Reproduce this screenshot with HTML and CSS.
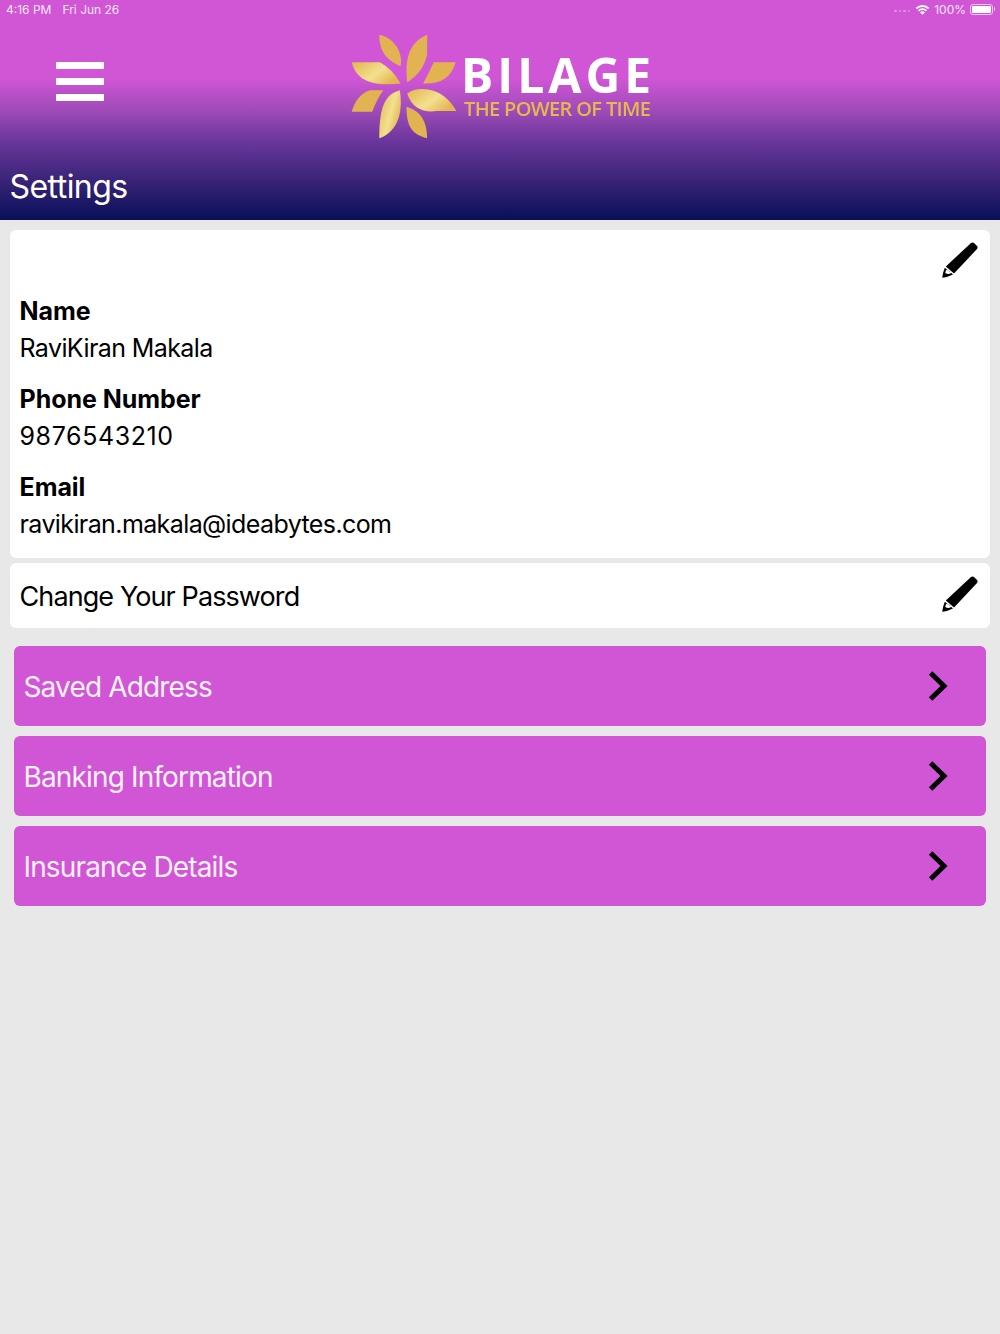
FILE: index.html
```html
<!DOCTYPE html>
<html>
    <head>
        <meta charset="utf-8">
        <title>Settings</title>
        <link rel="stylesheet" href="styles.css">
    </head>
    <body>
        <header class="top">
            <div class="status">
                <div class="status_left"><span>4:16 PM</span><span>Fri Jun 26</span></div>
                <div class="status_right">
                    <span class="dots"><i></i><i></i><i></i><i></i></span>
                    <svg class="wifi" viewBox="0 0 16 12" width="15" height="11">
                        <path d="M0.6 4.2 A10.6 10.6 0 0 1 15.4 4.2 L14 5.7 A8.6 8.6 0 0 0 2 5.7 Z" fill="#fff"/>
                        <path d="M3 6.7 A7.2 7.2 0 0 1 13 6.7 L11.6 8.1 A5.2 5.2 0 0 0 4.4 8.1 Z" fill="#fff"/>
                        <path d="M5.4 9.2 A3.8 3.8 0 0 1 10.6 9.2 L8 11.8 Z" fill="#fff"/>
                    </svg>
                    <span>100%</span>
                    <span class="battery"><b></b></span>
                </div>
            </div>
            <div class="brand_row">
                <div class="menu"><span></span><span></span><span></span></div>
                <div class="logo">
                    <svg class="flower" viewBox="30 40 325 322" width="108" height="107">
                        <defs>
                            <linearGradient id="shine" x1="0" y1="0" x2="1" y2="0.6">
                                <stop offset="0" stop-color="#e3b64f"/>
                                <stop offset="0.6" stop-color="#f3e08f"/>
                                <stop offset="1" stop-color="#e3b64f"/>
                            </linearGradient>
                        </defs>
                        <path fill="#e2b451" d="M118 45 C165 55 190 100 182 140 C150 125 118 105 118 45Z"/>
                        <path fill="#e2b451" d="M262 45 L262 105 Q250 160 202 188 C195 120 205 70 262 45Z"/>
                        <path fill="#e2b451" d="M348 128 H282 Q265 165 250 192 C300 195 335 175 348 128Z"/>
                        <path fill="url(#shine)" d="M35 128 H120 Q160 150 182 192 C110 200 50 190 35 128Z"/>
                        <path fill="#e2b451" d="M130 212 H90 Q50 225 35 277 H97 Q110 240 130 212Z"/>
                        <path fill="url(#shine)" d="M180 212 C135 225 118 260 118 357 C175 335 190 280 180 212Z"/>
                        <path fill="url(#shine)" d="M202 222 Q225 205 265 210 Q320 220 350 275 H290 C250 280 215 265 202 222Z"/>
                        <path fill="#e2b451" d="M200 262 C245 275 262 310 262 357 C215 345 200 320 200 262Z"/>
                    </svg>
                    <div class="logo_text">
                        <div class="logo_name">BILAGE</div>
                        <div class="logo_tag">THE POWER OF TIME</div>
                    </div>
                </div>
            </div>
            <h1 class="title">Settings</h1>
        </header>

        <main class="content">
            <section class="card profile">
                <div class="edit_row">
                    <svg class="pencil" viewBox="0 0 36 36" width="36" height="36"><use href="#pen"/></svg>
                </div>
                <div class="field">
                    <div class="label">Name</div>
                    <div class="value">RaviKiran Makala</div>
                </div>
                <div class="field">
                    <div class="label">Phone Number</div>
                    <div class="value phone">9876543210</div>
                </div>
                <div class="field">
                    <div class="label">Email</div>
                    <div class="value">ravikiran.makala@ideabytes.com</div>
                </div>
            </section>

            <section class="card password">
                <span>Change Your Password</span>
                <svg class="pencil" viewBox="0 0 36 36" width="36" height="36"><use href="#pen"/></svg>
            </section>

            <div class="links">
                <a class="link_row"><span>Saved Address</span><svg class="chev" viewBox="0 0 20 32" width="20" height="32"><use href="#chev"/></svg></a>
                <a class="link_row"><span>Banking Information</span><svg class="chev" viewBox="0 0 20 32" width="20" height="32"><use href="#chev"/></svg></a>
                <a class="link_row"><span>Insurance Details</span><svg class="chev" viewBox="0 0 20 32" width="20" height="32"><use href="#chev"/></svg></a>
            </div>
        </main>

        <svg class="defs" width="0" height="0">
            <defs>
                <g id="pen">
                    <path d="M29 1 Q30.5 0 32 1 L35 4 Q36.2 5.5 35 7 L12 31.5 L3.8 24.5Z"/>
                    <path fill-rule="evenodd" d="M2.8 25.7 L11 32.6 Q5 35.5 0.8 35.8 Q0.2 35.8 0.3 35 Q1 30 2.8 25.7Z M4 28 Q7 27.5 9 31 Q6.5 32.8 3.2 31Z"/>
                </g>
                <path id="chev" d="M2.6 3 L16 16 L2.6 29" fill="none" stroke="#000" stroke-width="5"/>
            </defs>
        </svg>
    </body>
</html>
```

FILE: styles.css
```css
html{
    height: 100%;
}
body{
    margin: 0;
    min-height: 100%;
    background: #e8e8e8;
    font-family: Inter, "Liberation Sans", sans-serif;
    color: #000;
}
.top{
    height: 220px;
    box-sizing: border-box;
    background: linear-gradient(#d056d6 0, #d056d6 78px, #a04bb8 110px, #6c379d 140px, #3a2478 180px, #080f58 220px);
    color: #fff;
    display: flex;
    flex-direction: column;
}
.status{
    height: 20px;
    box-sizing: border-box;
    padding: 0 7px 2px 6px;
    display: flex;
    justify-content: space-between;
    align-items: center;
    font-size: 12px;
    color: #f8e6f9;
}
.status_left{
    display: flex;
    gap: 11px;
}
.status_right{
    display: flex;
    align-items: center;
    gap: 4px;
}
.dots{
    display: flex;
    gap: 2px;
    margin-right: 1px;
    margin-top: 4px;
}
.dots i{
    width: 2.5px;
    height: 2.5px;
    border-radius: 50%;
    background: #e58fe8;
}
.battery{
    width: 23px;
    height: 11px;
    box-sizing: border-box;
    border: 1px solid #efc8f1;
    border-radius: 3px;
    padding: 1px;
    position: relative;
    display: block;
}
.battery::after{
    content: '';
    position: absolute;
    top: 2px;
    right: -3px;
    width: 1.5px;
    height: 4px;
    background: #efc8f1;
    border-radius: 0 1px 1px 0;
}
.battery b{
    display: block;
    height: 100%;
    background: #fff;
    border-radius: 1px;
}
.brand_row{
    height: 148px;
    display: flex;
    align-items: flex-start;
}
.menu{
    width: 48px;
    margin: 42px 0 0 56px;
    display: flex;
    flex-direction: column;
    gap: 9px;
}
.menu span{
    height: 7px;
    background: #fff;
}
.logo{
    display: flex;
    margin: 13px 0 0 246px;
    filter: blur(0.4px);
}
.flower{
    display: block;
    flex: none;
}
.logo_text{
    margin: 20px 0 0 3px;
    font-family: "Open Sans", sans-serif;
}
.logo_name{
    font-size: 48px;
    font-weight: 700;
    letter-spacing: 4px;
    line-height: 44px;
    color: #fff;
}
.logo_tag{
    font-size: 20px;
    font-weight: 600;
    line-height: 24px;
    letter-spacing: -0.65px;
    margin-left: 3px;
    color: #e5b94f;
}
.title{
    margin: 0 0 0 9.5px;
    font-size: 32px;
    font-weight: 400;
    line-height: 38px;
    letter-spacing: -0.55px;
}
.content{
    padding: 10px 10px 0;
}
.card{
    background: #fff;
    border-radius: 6px;
}
.profile{
    height: 328px;
    box-sizing: border-box;
    padding: 12px 10px 0 9.5px;
}
.edit_row{
    display: flex;
    justify-content: flex-end;
    height: 51px;
}
.pencil{
    display: block;
    margin-right: 2px;
}
.field{
    margin-bottom: 14px;
    font-size: 25px;
    line-height: 37px;
    letter-spacing: -0.6px;
}
.label{
    font-weight: 700;
    letter-spacing: -0.05px;
}
.phone{
    letter-spacing: 0.6px;
}
.password{
    height: 65px;
    margin-top: 5px;
    padding: 1px 10px 0 9.5px;
    box-sizing: border-box;
    display: flex;
    align-items: center;
    justify-content: space-between;
    font-size: 27px;
    letter-spacing: -0.9px;
}
.password .pencil{
    margin-bottom: 4px;
}
.links{
    margin: 18px 4px 0;
    display: flex;
    flex-direction: column;
    gap: 10px;
}
.link_row{
    height: 80px;
    box-sizing: border-box;
    padding: 1px 38px 0 9.5px;
    background: #d056d6;
    border-radius: 6px;
    color: #fdf2fd;
    font-size: 28px;
    letter-spacing: -0.85px;
    display: flex;
    align-items: center;
    justify-content: space-between;
}
.chev{
    margin-bottom: 1px;
}
.defs{
    position: absolute;
}
```
